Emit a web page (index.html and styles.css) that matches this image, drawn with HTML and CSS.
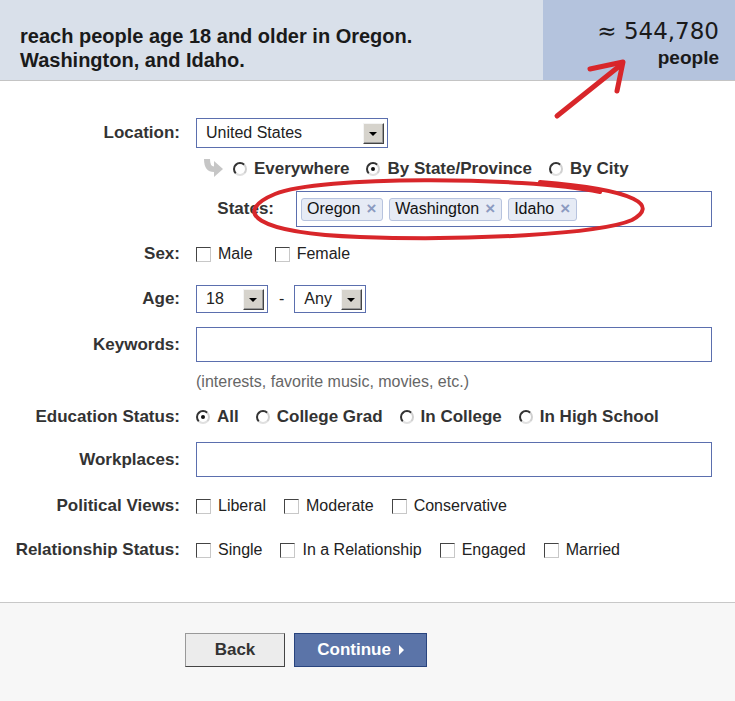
FILE: index.html
```html
<!DOCTYPE html>
<html>
<head>
    <meta charset="utf-8">
    <title>Targeting</title>
    <link rel="stylesheet" href="styles.css">
</head>
<body>

    <div class="page">
        <div class="summary">
            <div class="summary-text">reach people age 18 and older in Oregon.<br>Washington, and Idaho.</div>
            <div class="summary-count">
                <div class="count-num">&asymp; 544,780</div>
                <div class="count-label">people</div>
            </div>
        </div>

        <div class="targeting">
            <div class="row row-location">
                <div class="row-label">Location:</div>
                <div class="row-field">
                    <div class="select select-wide">
                        <span class="select-value">United States</span>
                        <span class="select-btn"></span>
                    </div>
                </div>
            </div>

            <div class="row row-scope">
                <div class="row-label"></div>
                <div class="row-field options bold-options">
                    <svg class="hook" width="20" height="19" viewBox="0 0 20 19">
                        <path d="M1 0 L7 0 Q7 7.5 11 7.5 L11 2 L20 10 L11 18 L11 13 Q1 13 1 0 Z" fill="#c6c6c6"/>
                    </svg>
                    <label class="opt"><span class="radio"></span>Everywhere</label>
                    <label class="opt"><span class="radio checked"></span>By State/Province</label>
                    <label class="opt"><span class="radio"></span>By City</label>
                </div>
            </div>

            <div class="row row-states">
                <div class="row-label"></div>
                <div class="row-field">
                    <div class="sub-label">States:</div>
                    <div class="token-box">
                        <span class="token">Oregon <b>&times;</b></span>
                        <span class="token">Washington <b>&times;</b></span>
                        <span class="token">Idaho <b>&times;</b></span>
                    </div>
                </div>
            </div>

            <div class="row row-sex">
                <div class="row-label">Sex:</div>
                <div class="row-field options">
                    <label class="opt"><span class="check"></span>Male</label>
                    <label class="opt"><span class="check"></span>Female</label>
                </div>
            </div>

            <div class="row row-age">
                <div class="row-label">Age:</div>
                <div class="row-field">
                    <div class="select select-small">
                        <span class="select-value">18</span>
                        <span class="select-btn"></span>
                    </div>
                    <span class="dash">-</span>
                    <div class="select select-small">
                        <span class="select-value">Any</span>
                        <span class="select-btn"></span>
                    </div>
                </div>
            </div>

            <div class="row row-keywords">
                <div class="row-label">Keywords:</div>
                <div class="row-field">
                    <div class="text-input"></div>
                </div>
            </div>

            <div class="row row-hint">
                <div class="row-label"></div>
                <div class="row-field hint">(interests, favorite music, movies, etc.)</div>
            </div>

            <div class="row row-edu">
                <div class="row-label">Education Status:</div>
                <div class="row-field options bold-options">
                    <label class="opt"><span class="radio checked"></span>All</label>
                    <label class="opt"><span class="radio"></span>College Grad</label>
                    <label class="opt"><span class="radio"></span>In College</label>
                    <label class="opt"><span class="radio"></span>In High School</label>
                </div>
            </div>

            <div class="row row-work">
                <div class="row-label">Workplaces:</div>
                <div class="row-field">
                    <div class="text-input"></div>
                </div>
            </div>

            <div class="row row-politics">
                <div class="row-label">Political Views:</div>
                <div class="row-field options">
                    <label class="opt"><span class="check"></span>Liberal</label>
                    <label class="opt"><span class="check"></span>Moderate</label>
                    <label class="opt"><span class="check"></span>Conservative</label>
                </div>
            </div>

            <div class="row row-rel">
                <div class="row-label">Relationship Status:</div>
                <div class="row-field options">
                    <label class="opt"><span class="check"></span>Single</label>
                    <label class="opt"><span class="check"></span>In a Relationship</label>
                    <label class="opt"><span class="check"></span>Engaged</label>
                    <label class="opt"><span class="check"></span>Married</label>
                </div>
            </div>
        </div>

        <div class="actions">
            <button class="btn btn-back">Back</button>
            <button class="btn btn-continue">Continue <span class="caret"></span></button>
        </div>

        <!-- hand-drawn annotations -->
        <svg class="marks" width="735" height="701" viewBox="0 0 735 701">
            <path d="M557 116 L622 64" stroke="#d8262a" stroke-width="5" stroke-linecap="round" fill="none"/>
            <path d="M590 69 L623 62 L617 91" stroke="#d8262a" stroke-width="5" stroke-linecap="round" stroke-linejoin="round" fill="none"/>
            <path d="M600 192 C520 176 320 176 275 194 C232 212 254 233 360 237 C470 241 600 234 632 220 C658 206 640 190 540 182"
                  stroke="#d8262a" stroke-width="4" stroke-linecap="round" fill="none"/>
        </svg>
    </div>

</body>
</html>
```

FILE: styles.css
```css
* {
    margin: 0;
    padding: 0;
    box-sizing: border-box;
}

body {
    font-family: "Liberation Sans", Arial, sans-serif;
    font-size: 16px;
    color: #222;
    background: #fff;
}

.page {
    position: relative;
    width: 735px;
    height: 701px;
    overflow: hidden;
}

/* summary header */
.summary {
    display: flex;
    height: 81px;
    border-bottom: 1px solid #c4c4c4;
}

.summary-text {
    flex: 1;
    background: #d9e0ea;
    padding: 24px 0 0 20px;
    font-size: 20px;
    font-weight: bold;
    line-height: 24px;
    color: #1a1a1a;
}

.summary-count {
    width: 192px;
    background: #b4c3dd;
    padding: 18px 16px 0 0;
    text-align: right;
    color: #1a1a1a;
}

.count-num {
    font-family: "DejaVu Sans", sans-serif;
    font-size: 23px;
    line-height: 27px;
}

.count-label {
    font-size: 19px;
    font-weight: bold;
    line-height: 26px;
}

/* form */
.targeting {
    height: 521px;
    padding-top: 37px;
}

.row {
    display: flex;
    align-items: center;
}

.row-label {
    width: 180px;
    text-align: right;
    font-size: 17px;
    font-weight: bold;
    color: #333;
    flex-shrink: 0;
}

.row-field {
    margin-left: 16px;
    display: flex;
    align-items: center;
}

.row-scope { margin-top: 11px; height: 20px; }
.row-states { margin-top: 12px; }
.row-sex { margin-top: 17px; height: 20px; }
.row-age { margin-top: 21px; }
.row-keywords { margin-top: 14px; }
.row-hint { margin-top: 11px; height: 18px; }
.row-edu { margin-top: 16px; height: 20px; }
.row-work { margin-top: 15px; }
.row-politics { margin-top: 19px; height: 20px; }
.row-rel { margin-top: 24px; height: 20px; }

/* select boxes */
.select {
    display: flex;
    align-items: center;
    justify-content: space-between;
    border: 1px solid #5b6fae;
    background: #fff;
    padding: 0 3px 0 9px;
}

.select-wide {
    width: 192px;
    height: 30px;
}

.select-small {
    width: 72px;
    height: 28px;
}

.select-btn {
    position: relative;
    width: 21px;
    height: 21px;
    background: #d6d3cc;
    border: 1px solid;
    border-color: #f4f4f4 #444 #444 #f4f4f4;
    box-shadow: inset -1px -1px 0 #999;
}

.select-btn:after {
    content: "";
    position: absolute;
    left: 5px;
    top: 8px;
    border-left: 4px solid transparent;
    border-right: 4px solid transparent;
    border-top: 4px solid #000;
}

.dash {
    margin: 0 10px 0 11px;
}

/* radios and checkboxes */
.options {
    gap: 18px;
}

.bold-options {
    font-size: 17px;
    font-weight: bold;
    color: #333;
    gap: 17px;
}

.opt {
    display: flex;
    align-items: center;
    gap: 7px;
}

.hook {
    margin: -1px -7px 0 7px;
}

.radio {
    position: relative;
    width: 14px;
    height: 14px;
    border-radius: 50%;
    border: 2px solid;
    border-color: #333 #d0d0d0 #e0e0e0 #333;
    background: #fff;
}

.radio.checked:after {
    content: "";
    position: absolute;
    left: 3px;
    top: 3px;
    width: 4px;
    height: 4px;
    border-radius: 50%;
    background: #111;
}

.check {
    width: 15px;
    height: 15px;
    border: 1px solid;
    border-color: #444 #c8c8c8 #c8c8c8 #444;
    background: #fff;
}

.row-sex .options { gap: 22px; }

/* states tokens */
.sub-label {
    width: 78px;
    text-align: right;
    font-size: 17px;
    font-weight: bold;
    color: #333;
    margin-right: 22px;
}

.token-box {
    width: 416px;
    height: 36px;
    border: 1px solid #5b6fae;
    display: flex;
    align-items: center;
    gap: 6px;
    padding-left: 4px;
}

.token {
    display: flex;
    align-items: center;
    height: 23px;
    padding: 0 6px 0 5px;
    background: #e6ebf5;
    border: 1px solid #b7c3de;
    border-radius: 3px;
    color: #111;
}

.token b {
    margin-left: 6px;
    color: #8b9ac0;
    font-size: 17px;
}

.text-input {
    width: 516px;
    height: 35px;
    border: 1px solid #5b6fae;
    background: #fff;
}

.hint {
    color: #666;
}

/* footer */
.actions {
    height: 99px;
    background: #f7f7f7;
    border-top: 1px solid #c8c8c8;
    display: flex;
    align-items: flex-start;
    gap: 9px;
    padding: 30px 0 0 185px;
}

.btn {
    height: 34px;
    font-family: inherit;
    font-size: 17px;
    font-weight: bold;
    cursor: pointer;
}

.btn-back {
    width: 100px;
    background: #ececec;
    border: 1px solid;
    border-color: #999 #444 #444 #999;
    color: #333;
}

.btn-continue {
    width: 133px;
    background: #5b74a8;
    border: 1px solid #29447e;
    color: #fff;
}

.caret {
    display: inline-block;
    margin-left: 3px;
    border-top: 5px solid transparent;
    border-bottom: 5px solid transparent;
    border-left: 5px solid #fff;
}

.marks {
    position: absolute;
    top: 0;
    left: 0;
    pointer-events: none;
}
```
